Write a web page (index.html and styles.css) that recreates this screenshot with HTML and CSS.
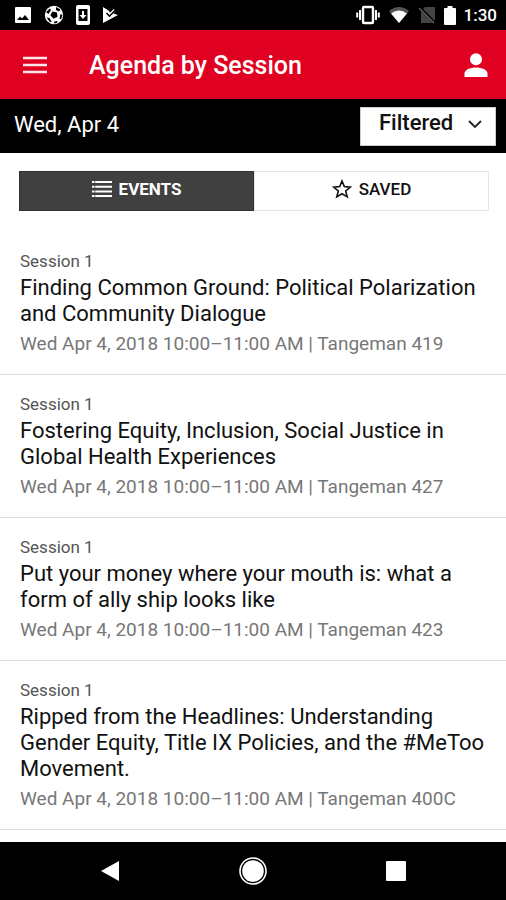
FILE: index.html
```html
<!DOCTYPE html>
<html lang="en">
<head>
<meta charset="utf-8">
<meta name="viewport" content="width=device-width, initial-scale=1">
<title>Agenda by Session</title>
<link rel="stylesheet" href="styles.css">
</head>
<body>
<div class="status">
  <div class="status-group status-left">
    <svg width="18" height="18" viewBox="0 0 18 18" aria-hidden="true"><path fill="#fff" fill-rule="evenodd" d="M2 1h14q1 0 1 1v14q0 1-1 1H2q-1 0-1-1V2q0-1 1-1zM3 14h12l-4-5-3 3.600-2-2z"/></svg>
    <svg width="20" height="20" viewBox="0 0 20 20" aria-hidden="true"><circle cx="10" cy="10" r="9.200" fill="#fff"/><path d="M8.500 6.500l4.500 1 .5 4.200-4 2-3.200-3.500zM2 7l4-3.500 1 1.500-2.500 4zM12 2l4.500 2.500L15 6.500 12 5zM16.500 9l2 1-1.500 4.500-1.500-1zM2.500 12.500l3 .5 2 3.500-1.500.8zM10.500 16.500l3-.5-.5 2-3 .5z"/></svg>
    <svg width="14" height="20" viewBox="0 0 14 20" aria-hidden="true"><rect width="14" height="20" rx="2" fill="#fff"/><path d="M2.500 4h9v12h-9z"/><path d="M6 6h2v4h2.500L7 14l-3.500-4H6z" fill="#fff"/></svg>
    <svg width="17" height="18" viewBox="0 0 17 18" aria-hidden="true"><path d="M1 1l5.500 3.500L8 6.500 12 3l1.500 2-2 2.500L16 9 1 17z" fill="#fff"/><path d="M4.500 7l3 3.200L13.500 4" fill="none" stroke="#000" stroke-width="1.600"/></svg>
  </div>
  <div class="status-group status-right">
    <svg width="24" height="20" viewBox="0 0 24 20" aria-hidden="true"><rect x="7" y="2" width="10" height="16" rx="1" fill="none" stroke="#fff" stroke-width="2.400"/><path d="M4 5v10M1.200 7.500v5M20 5v10M22.800 7.500v5" stroke="#fff" stroke-width="2"/></svg>
    <svg width="22" height="18" viewBox="0 0 22 18" aria-hidden="true"><path d="M1 5Q11-3 21 5L11 17z" fill="#555"/><path d="M3 7.500q8-6 16 0L11 17z" fill="#fff"/></svg>
    <svg width="18" height="18" viewBox="0 0 18 18" aria-hidden="true"><path d="M7 1h10v16H3V5z" fill="#444"/><path d="M1 1l16 16" stroke="#000" stroke-width="3"/><path d="M1 2l15 15" stroke="#666" stroke-width="1.200"/></svg>
    <svg width="12" height="19" viewBox="0 0 12 19" aria-hidden="true"><path d="M3.500 0h5v2H11q1 0 1 1v15q0 1-1 1H1q-1 0-1-1V3q0-1 1-1h2.500z" fill="#fff"/></svg>
    <time class="clock">1:30</time>
  </div>
</div>

<header class="appbar">
  <button class="icon-btn" type="button" aria-label="Menu">
    <svg width="24" height="18" viewBox="0 0 24 18"><path d="M0 2h24M0 9h24M0 16h24" stroke="#fff" stroke-opacity=".9" stroke-width="2.600"/></svg>
  </button>
  <h1 class="appbar-title">Agenda by Session</h1>
  <button class="icon-btn" type="button" aria-label="Profile">
    <svg width="24" height="24" viewBox="0 0 24 24"><circle cx="12" cy="6.200" r="6" fill="#fff"/><path d="M.5 24v-3.500C.5 16.500 7 14.500 12 14.500s11.500 2 11.500 6V24z" fill="#fff"/></svg>
  </button>
</header>

<div class="datebar">
  <span class="date">Wed, Apr 4</span>
  <div class="filter">
    <select class="filter-select" aria-label="Filter sessions"><option>Filtered</option></select>
    <svg class="filter-arrow" width="14" height="10" viewBox="0 0 14 10" aria-hidden="true"><path d="M1 2l6 6 6-6" fill="none" stroke="#222" stroke-width="1.800"/></svg>
  </div>
</div>

<main class="content">
  <div class="tabs">
    <button class="tab tab-active" type="button" aria-pressed="true">
      <svg width="20" height="18" viewBox="0 0 20 18" aria-hidden="true"><path d="M0 2h2.500M3.200 2h16.800M0 6.700h2.500M3.200 6.700h16.800M0 11.400h2.500M3.200 11.400h16.800M0 16h2.500M3.200 16h16.800" stroke="#fff" stroke-width="2"/></svg>
      EVENTS
    </button>
    <button class="tab" type="button" aria-pressed="false">
      <svg width="20" height="20" viewBox="0 0 20 20" aria-hidden="true"><path d="M10 2l2.300 5.600 6 .5-4.600 3.900 1.500 5.900L10 14.700l-5.200 3.200L6.300 12 1.700 8.100l6-.5z" fill="none" stroke="#111" stroke-width="1.600"/></svg>
      SAVED
    </button>
  </div>

  <ul class="sessions">
    <li class="session">
      <p class="session-label">Session 1</p>
      <h2 class="session-title">Finding Common Ground: Political Polarization and Community Dialogue</h2>
      <p class="session-meta">Wed Apr 4, 2018 10:00–11:00 AM | Tangeman 419</p>
    </li>
    <li class="session">
      <p class="session-label">Session 1</p>
      <h2 class="session-title">Fostering Equity, Inclusion, Social Justice in Global Health Experiences</h2>
      <p class="session-meta">Wed Apr 4, 2018 10:00–11:00 AM | Tangeman 427</p>
    </li>
    <li class="session">
      <p class="session-label">Session 1</p>
      <h2 class="session-title">Put your money where your mouth is: what a form of ally ship looks like</h2>
      <p class="session-meta">Wed Apr 4, 2018 10:00–11:00 AM | Tangeman 423</p>
    </li>
    <li class="session">
      <p class="session-label">Session 1</p>
      <h2 class="session-title">Ripped from the Headlines: Understanding Gender Equity, Title IX Policies, and the #MeToo Movement.</h2>
      <p class="session-meta">Wed Apr 4, 2018 10:00–11:00 AM | Tangeman 400C</p>
    </li>
  </ul>
</main>

<nav class="navbar" aria-label="System">
  <button class="nav-btn" type="button" aria-label="Back"><svg width="18" height="22" viewBox="0 0 18 22"><path d="M0 11L18 1v20z" fill="#fff"/></svg></button>
  <button class="nav-btn" type="button" aria-label="Home"><svg width="28" height="28" viewBox="0 0 28 28"><circle cx="14" cy="14" r="13" fill="none" stroke="#fff" stroke-width="1.600"/><circle cx="14" cy="14" r="10.800" fill="#fff"/></svg></button>
  <button class="nav-btn" type="button" aria-label="Recent apps"><svg width="20" height="20" viewBox="0 0 20 20"><rect width="20" height="20" rx="1" fill="#fff"/></svg></button>
</nav>
</body>
</html>
```
FILE: styles.css
```css
* {
  box-sizing: border-box;
}

body {
  margin: 0;
  min-height: 100vh;
  display: flex;
  flex-direction: column;
  background: #fff;
  color: #111;
  font-family: Roboto, "Liberation Sans", sans-serif;
}

h1, h2, p, ul {
  margin: 0;
  padding: 0;
}

button {
  border: 0;
  padding: 0;
  background: none;
  font: inherit;
}

svg {
  display: block;
  flex: none;
}

.status {
  height: 30px;
  padding: 0 9px 0 14px;
  display: flex;
  align-items: center;
  justify-content: space-between;
  background: #000;
}

.status-group {
  display: flex;
  align-items: center;
}

.status-left {
  gap: 12px;
}

.status-right {
  gap: 8px;
}

.clock {
  color: #fff;
  font-size: 17px;
  font-weight: 500;
  line-height: 30px;
}

.appbar {
  height: 69px;
  padding: 0 18px 0 23px;
  display: flex;
  align-items: center;
  background: #e00122;
}

.appbar-title {
  flex: 1;
  padding: 2px 0 0 42px;
  color: #fff;
  font-size: 25px;
  font-weight: 500;
  line-height: 32px;
}

.datebar {
  height: 54px;
  padding: 0 10px 0 14px;
  display: flex;
  align-items: center;
  justify-content: space-between;
  background: #000;
}

.date {
  padding-bottom: 2px;
  color: #fff;
  font-size: 22px;
  line-height: 28px;
}

.filter {
  position: relative;
}

.filter-select {
  display: block;
  width: 136px;
  height: 39px;
  padding: 0 36px 6px 18px;
  appearance: none;
  border: 1px solid #ccc;
  border-radius: 0;
  background: #fff;
  color: #111;
  font: 500 22px/28px Roboto, "Liberation Sans", sans-serif;
}

.filter-arrow {
  position: absolute;
  top: 12px;
  right: 14px;
  pointer-events: none;
}

.content {
  flex: 1;
}

.tabs {
  display: flex;
  height: 40px;
  margin: 18px 17px 21px 19px;
}

.tab {
  flex: 1;
  display: flex;
  align-items: center;
  justify-content: center;
  gap: 7px;
  padding-bottom: 4px;
  border: 1px solid #e4e4e4;
  color: #111;
  font-size: 17px;
  font-weight: 500;
  line-height: 24px;
}

.tab-active {
  border-color: #333;
  background: #404040;
  color: #fff;
  font-weight: 700;
}

.sessions {
  list-style: none;
}

.session {
  padding: 19px 18px 18px 20px;
  border-bottom: 1px solid #ddd;
}

.session-label {
  color: #555;
  font-size: 17px;
  line-height: 20px;
}

.session-title {
  padding: 4px 0 5px;
  font-size: 22px;
  font-weight: 400;
  line-height: 26px;
}

.session-meta {
  color: #777;
  font-size: 19px;
  line-height: 24px;
}

.navbar {
  height: 58px;
  padding: 0 39px;
  display: flex;
  align-items: center;
  background: #000;
}

.nav-btn {
  flex: 1;
  display: flex;
  justify-content: center;
}
```
